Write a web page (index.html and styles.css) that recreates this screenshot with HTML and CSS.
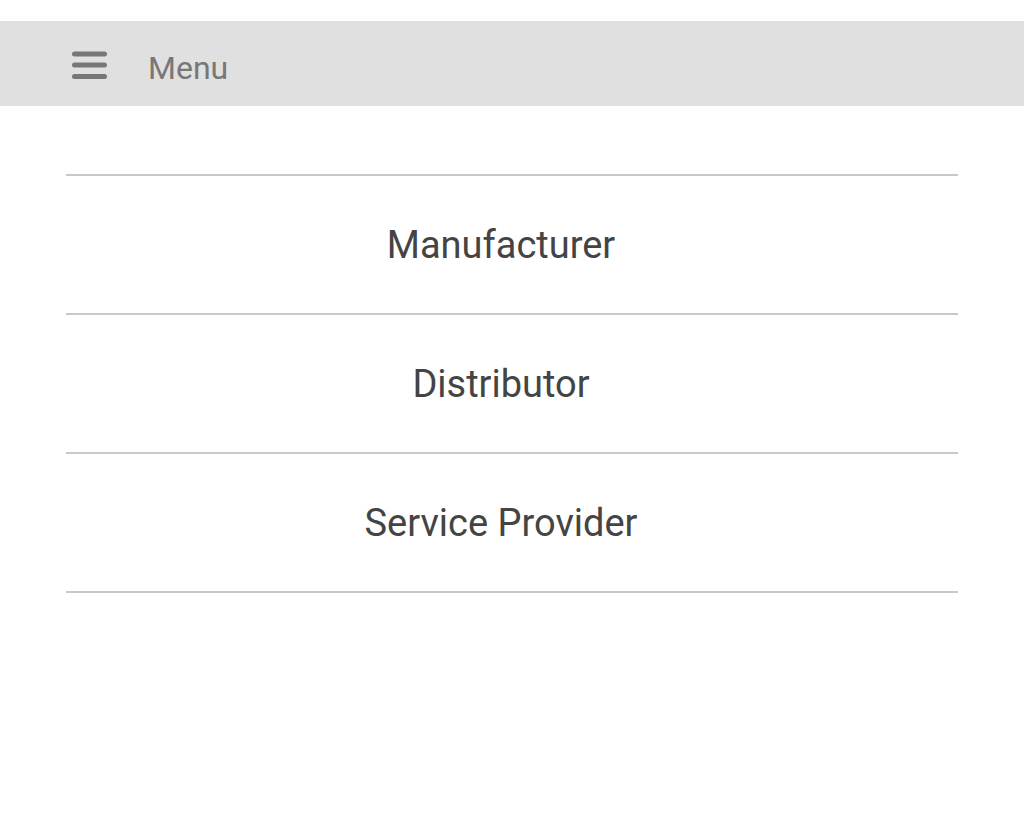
FILE: index.html
```html
<!DOCTYPE html>
<html lang="en">

<head>
  <meta charset="UTF-8">
  <meta name="viewport" content="width=device-width, initial-scale=1.0">
  <title>Menu</title>
  <link rel="stylesheet" href="styles.css">
</head>

<body>
  <div class="top-bar">
    <span class="menu-icon">
      <svg width="35" height="29" viewBox="0 0 35 29">
        <rect x="0" y="0.5" width="35" height="5" rx="2.5" />
        <rect x="0" y="11.5" width="35" height="5" rx="2.5" />
        <rect x="0" y="23" width="35" height="5" rx="2.5" />
      </svg>
    </span>
    <span class="menu-label">Menu</span>
  </div>

  <ul class="role-list">
    <li class="role-item">Manufacturer</li>
    <li class="role-item">Distributor</li>
    <li class="role-item">Service Provider</li>
  </ul>
</body>
</html>
```

FILE: styles.css
```css
body {
  margin: 0;
  background-color: white;
  font-family: Roboto, 'Noto Sans', sans-serif;
}

.top-bar {
  margin-top: 21px;
  height: 85px;
  background-color: #e0e0e0;
  display: flex;
  align-items: center;
  padding-left: 72px;
}

.menu-icon {
  display: flex;
  fill: #777;
  margin-right: 41px;
  margin-top: 4px;
}

.menu-label {
  font-size: 32px;
  color: #777;
  margin-top: 8px;
}

.role-list {
  list-style: none;
  margin: 68px 66px 0 66px;
  padding: 0;
  border-top: 2px solid #c8c8c8;
}

.role-item {
  height: 137px;
  display: flex;
  align-items: center;
  justify-content: center;
  border-bottom: 2px solid #c8c8c8;
  font-size: 38px;
  color: #444;
  padding-right: 22px;
}
```
